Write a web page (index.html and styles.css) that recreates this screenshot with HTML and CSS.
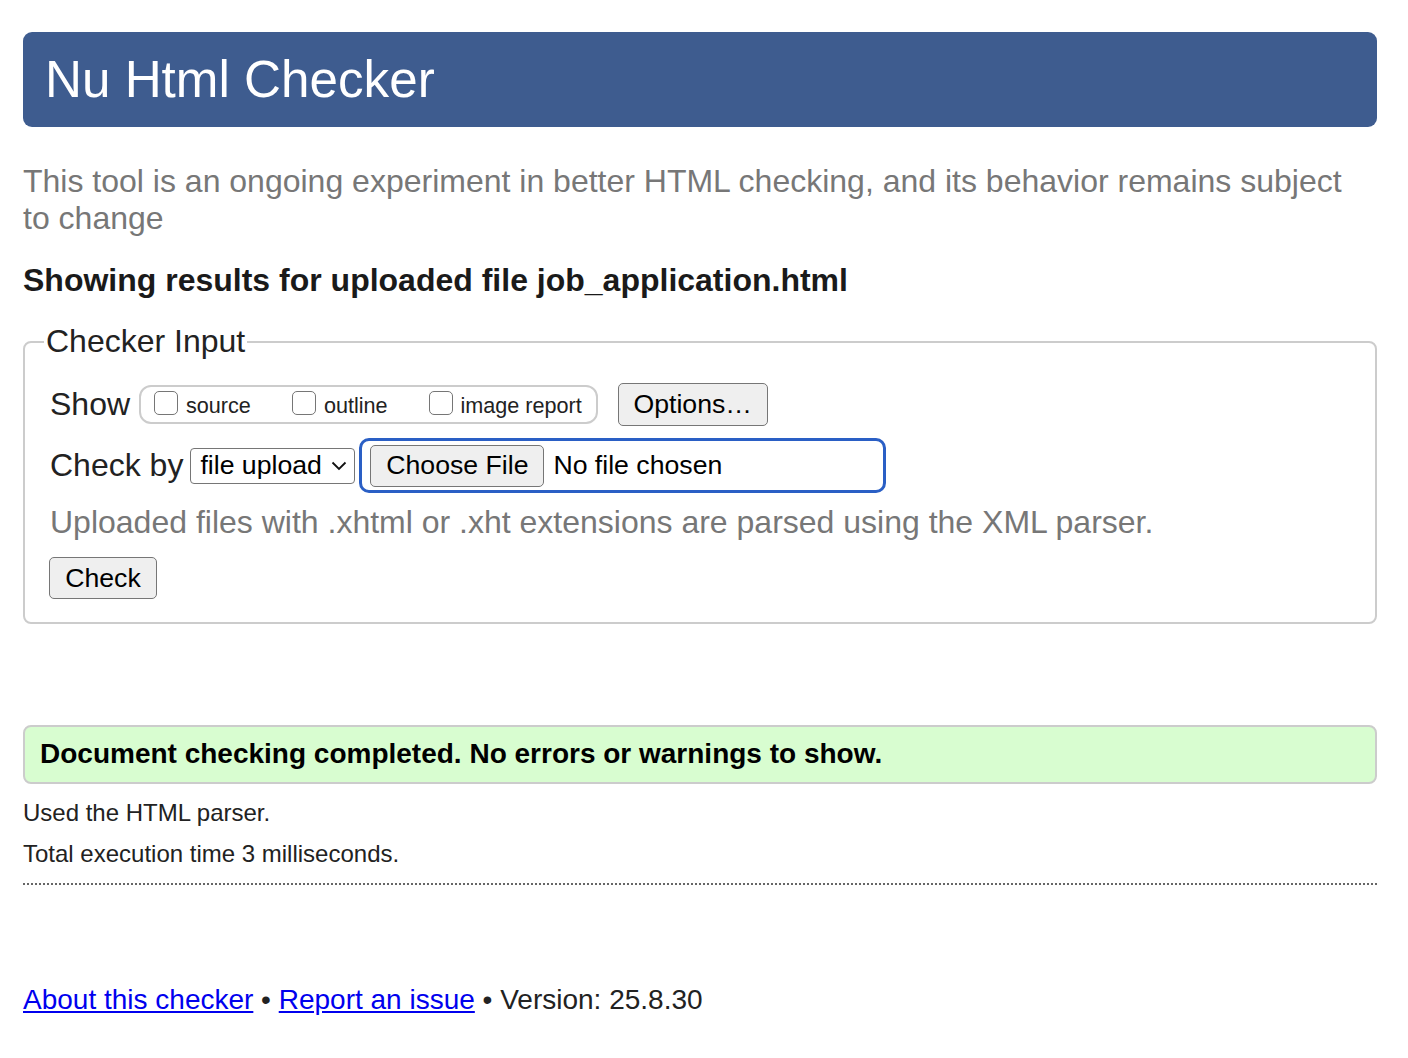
FILE: index.html
```html
<!DOCTYPE html>
<html lang="en">
<head>
<meta charset="utf-8">
<title>Nu Html Checker</title>
<link rel="stylesheet" href="styles.css">
</head>
<body>
<header class="masthead"><h1>Nu Html Checker</h1></header>
<p class="tagline">This tool is an ongoing experiment in better HTML checking, and its behavior remains subject to change</p>
<h2 class="results-title">Showing results for uploaded file job_application.html</h2>
<fieldset class="checker">
  <legend class="checker-legend">Checker Input</legend>
  <div class="row row-show">
    <span class="row-label">Show</span>
    <span class="show-group">
      <span class="opt"><span class="box"></span><span class="opt-text">source</span></span>
      <span class="opt"><span class="box"></span><span class="opt-text">outline</span></span>
      <span class="opt"><span class="box"></span><span class="opt-text">image report</span></span>
    </span>
    <span class="btn btn-options">Options…</span>
  </div>
  <div class="row row-check">
    <span class="row-label">Check by</span>
    <span class="select">file upload<svg class="chev" width="16" height="10" viewBox="0 0 16 10"><path d="M1.5 1.5 L8 8 L14.5 1.5" fill="none" stroke="#111" stroke-width="1.8"/></svg></span>
    <span class="file-wrap"><span class="btn btn-file">Choose File</span><span class="file-none">No file chosen</span></span>
  </div>
  <p class="hint">Uploaded files with .xhtml or .xht extensions are parsed using the XML parser.</p>
  <span class="btn btn-check">Check</span>
</fieldset>
<div class="success">Document checking completed. No errors or warnings to show.</div>
<p class="meta meta-first">Used the HTML parser.</p>
<p class="meta meta-last">Total execution time 3 milliseconds.</p>
<footer class="foot"><a href="#">About this checker</a> • <a href="#">Report an issue</a> • Version: 25.8.30</footer>
</body>
</html>
```
FILE: styles.css
```css
html, body { background: #fff; }
body {
  margin: 0;
  padding: 32px 31px 0 23px;
  font-family: "Liberation Sans", Arial, sans-serif;
  font-size: 32px;
  line-height: 36.8px;
  color: #222;
}
.masthead {
  height: 95px;
  background: #3e5c8f;
  border-radius: 9px;
  padding-left: 22px;
}
.masthead h1 {
  margin: 0;
  font-size: 51.2px;
  font-weight: normal;
  line-height: 95px;
  color: #fff;
}
.tagline {
  margin: 36px 0 0;
  color: #777;
}
.results-title {
  margin: 25px 0 0;
  font-size: 32px;
  font-weight: bold;
  color: #1a1a1a;
}
.checker {
  margin: 25px 0 0;
  border: 2px solid #ccc;
  border-radius: 8px;
  padding: 23px 25px 23px 25px;
}
.checker-legend {
  padding: 0 2px;
  margin-left: -6px;
  color: #222;
}
.row {
  display: flex;
  align-items: center;
}
.row-label { color: #222; }
.show-group {
  margin-left: 9px;
  display: inline-flex;
  align-items: center;
  height: 35px;
  border: 2px solid #ccc;
  border-radius: 12px;
  padding: 0 14px 0 13px;
  font-size: 21.6px;
}
.opt { display: inline-flex; align-items: center; margin-right: 41px; }
.opt:last-child { margin-right: 0; }
.box {
  width: 22px; height: 22px;
  border: 1.5px solid #767676;
  border-radius: 5px;
  margin-right: 8px;
  position: relative; top: -2px;
}
.opt-text { color: #222; position: relative; top: 2px; }
.btn {
  display: inline-flex;
  align-items: center;
  justify-content: center;
  box-sizing: border-box;
  background: #efefef;
  border: 1.5px solid #767676;
  border-radius: 5px;
  font-size: 26.67px;
  color: #000;
}
.btn-options { margin-left: 20px; width: 150px; height: 43px; }
.row-check { margin-top: 12px; }
.select {
  margin-left: 7px;
  box-sizing: border-box;
  height: 36px; width: 165px;
  display: inline-flex; align-items: center;
  border: 1.5px solid #767676;
  border-radius: 4px;
  padding-left: 9px;
  font-size: 26.67px; color: #000;
}
.chev { margin-left: 9px; }
.file-wrap {
  margin-left: 4px;
  box-sizing: border-box;
  width: 527px; height: 55px;
  display: inline-flex; align-items: center;
  border: 3px solid #2a5fc5;
  border-radius: 10px;
  padding-left: 8px;
}
.btn-file { width: 174px; height: 42px; }
.file-none { margin-left: 9px; font-size: 26.67px; color: #000; }
.hint { margin: 11px 0 0; color: #777; }
.btn-check { margin-top: 16px; width: 108px; height: 42px; margin-left: -1px; }
.success {
  margin-top: 101px;
  box-sizing: border-box;
  height: 59px;
  background: #d8fdd0;
  border: 2px solid #ccc;
  border-radius: 8px;
  padding-left: 15px;
  display: flex; align-items: center;
  font-weight: bold;
  font-size: 28px;
  color: #000;
}
.meta { margin: 0; font-size: 24px; line-height: 41px; color: #222; }
.meta-first { margin-top: 8px; }
.meta-last { border-bottom: 2px dotted #666; padding-bottom: 9px; }
.foot { margin-top: 97px; font-size: 28px; color: #222; }
.foot a { color: #00e; text-decoration: underline; }
```
